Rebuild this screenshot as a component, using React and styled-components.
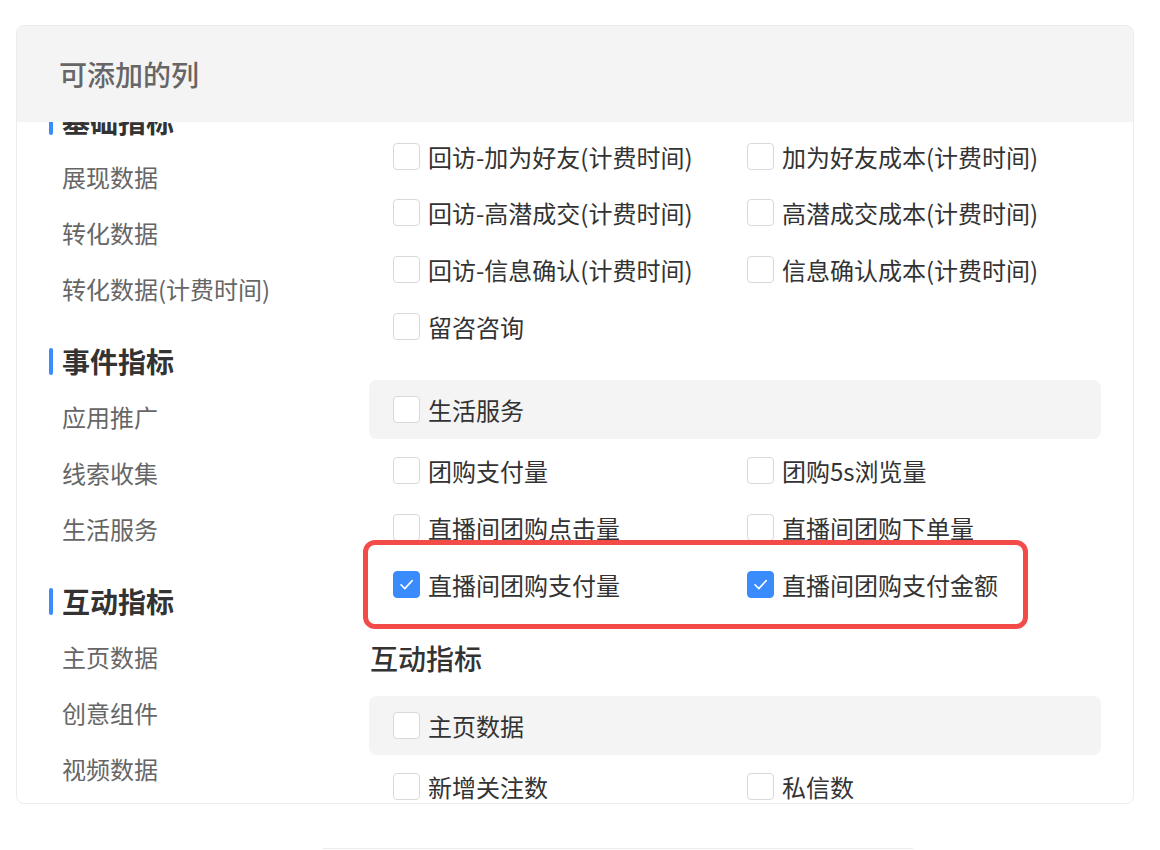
import React from 'react';
import styled, { createGlobalStyle } from 'styled-components';

const GlobalStyle = createGlobalStyle`
  html, body {
    margin: 0;
    padding: 0;
    background: #ffffff;
    font-family: "Noto Sans CJK SC", "Noto Sans", sans-serif;
  }
`;

const Page = styled.div`
  width: 1160px;
  height: 850px;
  box-sizing: border-box;
  padding: 25px 26px 0 16px;
  overflow: hidden;
`;

const Card = styled.div`
  height: 779px;
  box-sizing: border-box;
  border: 1px solid #ececec;
  border-radius: 8px;
  display: flex;
  flex-direction: column;
  overflow: hidden;
`;

const Header = styled.div`
  height: 96px;
  flex-shrink: 0;
  background: #f4f4f4;
  display: flex;
  align-items: center;
  padding-left: 42px;
  font-size: 28px;
  font-weight: 500;
  color: #666;
  position: relative;
  z-index: 2;
`;

const Body = styled.div`
  flex: 1;
  display: flex;
  overflow: hidden;
`;

const Sidebar = styled.div`
  width: 352px;
  flex-shrink: 0;
  box-sizing: border-box;
  padding-left: 32px;
  margin-top: -29px;
`;

const NavTitle = styled.div`
  height: 56px;
  margin-top: 16px;
  display: flex;
  align-items: center;
  font-size: 28px;
  font-weight: 600;
  color: #333;

  &:first-child {
    margin-top: 0;
  }
`;

const NavBar = styled.span`
  width: 4px;
  height: 27px;
  border-radius: 2px;
  background: #3a8bfb;
  margin-right: 9px;
`;

const NavItem = styled.div`
  height: 56px;
  line-height: 56px;
  padding-left: 13px;
  font-size: 24px;
  color: #666;
`;

const Content = styled.div`
  width: 732px;
  padding-top: 6px;
`;

const Grid = styled.div`
  display: grid;
  grid-template-columns: 354px 354px;
  grid-auto-rows: 56.67px;
  padding-left: 24px;
`;

const Option = styled.label`
  display: flex;
  align-items: center;
  gap: 8px;
  font-size: 24px;
  color: #333;
  white-space: nowrap;
`;

const Box = styled.span`
  width: 27px;
  height: 27px;
  box-sizing: border-box;
  border-radius: 4px;
  border: 1px solid ${p => (p.checked ? '#3a8bfb' : '#d9d9d9')};
  background: ${p => (p.checked ? '#3a8bfb' : '#fff')};
  display: flex;
  align-items: center;
  justify-content: center;
  flex-shrink: 0;
`;

const GroupBar = styled.div`
  height: 59px;
  margin: ${p => p.top}px 0 4px;
  border-radius: 8px;
  background: #f4f4f4;
  display: flex;
  align-items: center;
  padding-left: 24px;
`;

const Highlight = styled.div`
  position: relative;
  z-index: 1;
  width: 665px;
  box-sizing: border-box;
  margin: -16px 0 -16px -6px;
  padding: 11px 0;
  border: 5px solid #f24b48;
  border-radius: 12px;
  background: #fff;

  ${Grid} {
    padding-left: 25px;
  }
`;

const SectionTitle = styled.div`
  height: 38px;
  margin-top: 26px;
  line-height: 38px;
  padding-left: 1px;
  font-size: 28px;
  font-weight: 500;
  color: #333;
`;

const Footer = styled.div`
  width: 590px;
  margin: 44px 0 0 307px;
  border-top: 1px solid #ebebeb;
`;

const Check = () => (
  <svg width="19" height="19" viewBox="0 0 19 19" fill="none">
    <path d="M4 9.8l3.8 3.8L15.2 5.6" stroke="#fff" strokeWidth="1.6" strokeLinecap="round" strokeLinejoin="round" />
  </svg>
);

const Item = ({ label, checked }) => (
  <Option>
    <Box checked={checked}>{checked && <Check />}</Box>
    {label}
  </Option>
);

const nav = [
  { title: '基础指标', items: ['展现数据', '转化数据', '转化数据(计费时间)'] },
  { title: '事件指标', items: ['应用推广', '线索收集', '生活服务'] },
  { title: '互动指标', items: ['主页数据', '创意组件', '视频数据'] },
];

const topRows = [
  '回访-加为好友(计费时间)', '加为好友成本(计费时间)',
  '回访-高潜成交(计费时间)', '高潜成交成本(计费时间)',
  '回访-信息确认(计费时间)', '信息确认成本(计费时间)',
  '留咨咨询',
];

const lifeRows = ['团购支付量', '团购5s浏览量', '直播间团购点击量', '直播间团购下单量'];

export default function App() {
  return (
    <Page>
      <GlobalStyle />
      <Card>
        <Header>可添加的列</Header>
        <Body>
          <Sidebar>
            {nav.map(group => (
              <React.Fragment key={group.title}>
                <NavTitle>
                  <NavBar />
                  {group.title}
                </NavTitle>
                {group.items.map(item => (
                  <NavItem key={item}>{item}</NavItem>
                ))}
              </React.Fragment>
            ))}
          </Sidebar>
          <Content>
            <Grid>
              {topRows.map(label => <Item key={label} label={label} />)}
            </Grid>
            <GroupBar top={25}>
              <Item label="生活服务" />
            </GroupBar>
            <Grid>
              {lifeRows.map(label => <Item key={label} label={label} />)}
            </Grid>
            <Highlight>
              <Grid>
                <Item label="直播间团购支付量" checked />
                <Item label="直播间团购支付金额" checked />
              </Grid>
            </Highlight>
            <SectionTitle>互动指标</SectionTitle>
            <GroupBar top={19}>
              <Item label="主页数据" />
            </GroupBar>
            <Grid>
              <Item label="新增关注数" />
              <Item label="私信数" />
            </Grid>
          </Content>
        </Body>
      </Card>
      <Footer />
    </Page>
  );
}
